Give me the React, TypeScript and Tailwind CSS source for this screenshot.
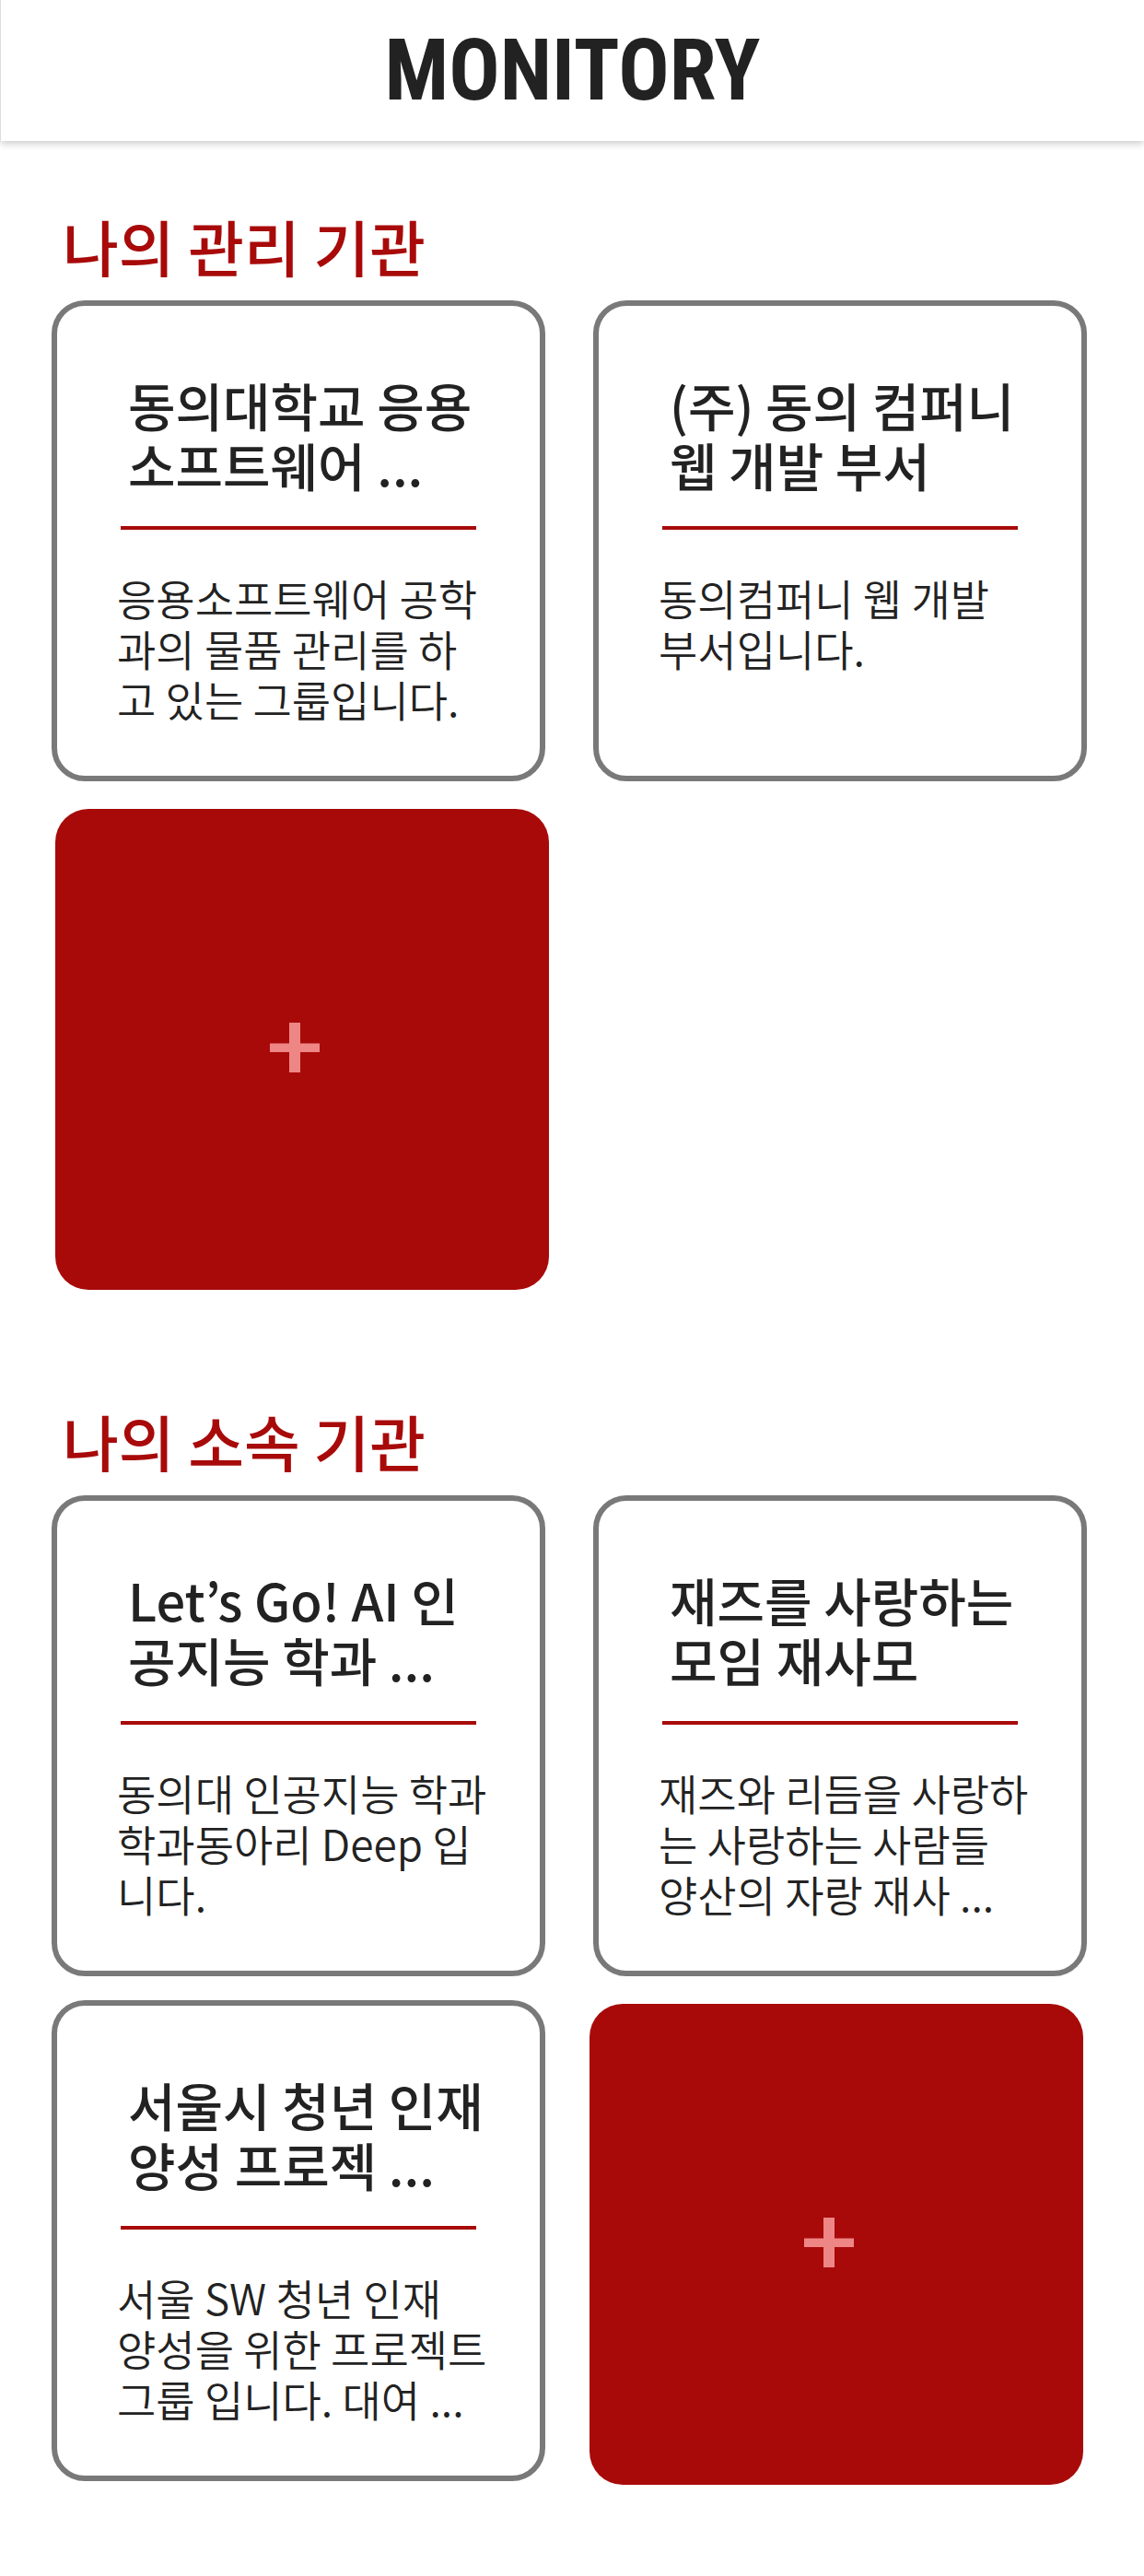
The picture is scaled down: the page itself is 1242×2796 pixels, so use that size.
type Group = { title: string; description: string };

const managedGroups: Group[] = [
  {
    title: "동의대학교 응용\n소프트웨어 ...",
    description: "응용소프트웨어 공학\n과의 물품 관리를 하\n고 있는 그룹입니다.",
  },
  {
    title: "(주) 동의 컴퍼니\n웹 개발 부서",
    description: "동의컴퍼니 웹 개발\n부서입니다.",
  },
];

const joinedGroups: Group[] = [
  {
    title: "Let’s Go! AI 인\n공지능 학과 ...",
    description: "동의대 인공지능 학과\n학과동아리 Deep 입\n니다.",
  },
  {
    title: "재즈를 사랑하는\n모임 재사모",
    description: "재즈와 리듬을 사랑하\n는 사랑하는 사람들\n양산의 자랑 재사 ...",
  },
  {
    title: "서울시 청년 인재\n양성 프로젝 ...",
    description: "서울 SW 청년 인재\n양성을 위한 프로젝트\n그룹 입니다. 대여 ...",
  },
];

function GroupCard({ title, description }: Group) {
  return (
    <li>
      <a
        href="#"
        className="block min-h-[522px] rounded-[36px] border-6 border-[#797979] px-[65px] pt-[74px]"
      >
        <h3 className="ml-3 text-[56px] leading-[65px] font-medium whitespace-pre">
          {title}
        </h3>
        <hr className="mx-1 mt-[35px] border-0 border-t-4 border-[#a80a0a]" />
        <p className="mt-[46px] text-[46px] leading-[55px] font-[350] whitespace-pre">
          {description}
        </p>
      </a>
    </li>
  );
}

function AddTile({ label }: { label: string }) {
  return (
    <li className="mt-1 odd:-mr-1 odd:ml-1 even:mr-1 even:-ml-1">
      <button
        type="button"
        aria-label={label}
        className="flex min-h-[522px] w-full items-center justify-center rounded-[36px] bg-[#a80a0a] pr-4 pb-1 text-[#ee8685]"
      >
        <svg width="54" height="54" viewBox="0 0 54 54" fill="currentColor" aria-hidden="true">
          <path d="M21 0h12v22.5h21v9.5h-21v22h-12v-22h-21v-9.5h21z" />
        </svg>
      </button>
    </li>
  );
}

function GroupSection({
  heading,
  groups,
  addLabel,
}: {
  heading: string;
  groups: Group[];
  addLabel: string;
}) {
  return (
    <section>
      <h2 className="ml-3 text-[66px] leading-[72px] font-medium text-[#a80a0a]">{heading}</h2>
      <ul className="mt-6 grid grid-cols-2 items-start gap-x-[52px] gap-y-[26px]">
        {groups.map((group) => (
          <GroupCard key={group.title} {...group} />
        ))}
        <AddTile label={addLabel} />
      </ul>
    </section>
  );
}

export default function App() {
  return (
    <div className="min-h-screen bg-white font-['Noto_Sans_CJK_KR',sans-serif] text-[#222222]">
      <header className="flex h-[153px] items-center justify-center border-l border-[#dddddd] bg-white shadow-[0_3px_8px_rgba(0,0,0,0.2)]">
        <h1 className="font-['Roboto_Condensed','Liberation_Sans',sans-serif] text-[92px] leading-none font-bold">
          MONITORY
        </h1>
      </header>
      <main className="flex flex-col gap-[127px] pt-[77px] pr-[62px] pb-[98px] pl-14">
        <GroupSection heading="나의 관리 기관" groups={managedGroups} addLabel="관리 기관 추가" />
        <GroupSection heading="나의 소속 기관" groups={joinedGroups} addLabel="소속 기관 추가" />
      </main>
    </div>
  );
}
